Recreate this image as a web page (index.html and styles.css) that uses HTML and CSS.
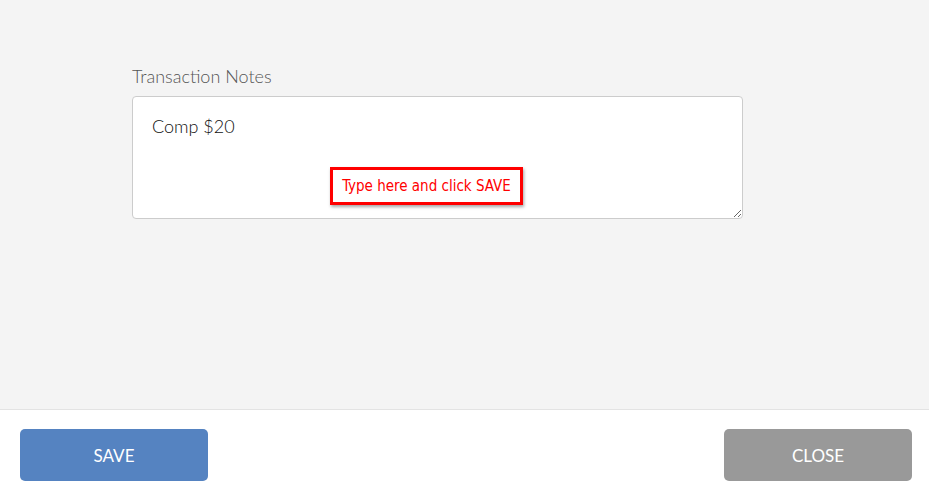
FILE: index.html
```html
<!DOCTYPE html>
<html lang="en">
<head>
    <meta charset="UTF-8">
    <meta name="viewport" content="width=device-width, initial-scale=1.0">
    <title>Transaction Notes</title>
    <link rel="stylesheet" href="styles.css">
</head>
<body>
    <div class="modal">
        <div class="modal-body">
            <div class="field">
                <label for="notes">Transaction Notes</label>
                <div class="notes-wrapper">
                    <textarea id="notes">Comp $20</textarea>
                    <span class="callout">Type here and click SAVE</span>
                </div>
            </div>
        </div>
        <div class="modal-footer">
            <button class="btn btn-save">SAVE</button>
            <button class="btn btn-close">CLOSE</button>
        </div>
    </div>
</body>
</html>
```

FILE: styles.css
```css
*,
*::before,
*::after{
    padding: 0;
    margin: 0;
    box-sizing: border-box;
}
html, body{
    height: 100%;
}
body{
    font-family: "Lato", "Open Sans", sans-serif;
    background-color: #ffffff;
}
.modal{
    height: 100%;
    display: flex;
    flex-direction: column;
}
.modal-body{
    flex: 1;
    background-color: #f4f4f4;
    border-bottom: 1px solid #e3e3e3;
    padding: 64px 0 0 132px;
}
.field{
    width: 611px;
}
.field label{
    display: block;
    font-size: 18px;
    font-weight: 300;
    color: #555555;
    line-height: 24px;
    margin-bottom: 8px;
}
.notes-wrapper{
    position: relative;
}
textarea{
    display: block;
    width: 100%;
    height: 123px;
    border: 1px solid #cccccc;
    border-radius: 4px;
    background-color: #ffffff;
    padding: 18px 19px;
    font-family: "Lato", sans-serif;
    font-size: 18px;
    font-weight: 300;
    color: #111111;
    resize: vertical;
    outline: none;
}
/* red hint box over the textarea */
.callout{
    position: absolute;
    left: 198px;
    top: 71px;
    width: 193px;
    height: 38px;
    border: 3px solid #ff0000;
    background-color: #ffffff;
    color: #ff0000;
    font-family: "DejaVu Sans Condensed", "Liberation Sans", sans-serif;
    font-size: 15px;
    line-height: 32px;
    text-align: center;
    box-shadow: 1px 2px 3px rgba(0,0,0,0.35);
}
.modal-footer{
    height: 87px;
    display: flex;
    justify-content: space-between;
    padding: 19px 17px 0 20px;
}
.btn{
    width: 188px;
    height: 52px;
    border: none;
    border-radius: 5px;
    color: #ffffff;
    font-family: "Lato", sans-serif;
    font-size: 17px;
    font-weight: 400;
}
.btn-save{
    background-color: #5583c1;
}
.btn-close{
    background-color: #999999;
}
```
